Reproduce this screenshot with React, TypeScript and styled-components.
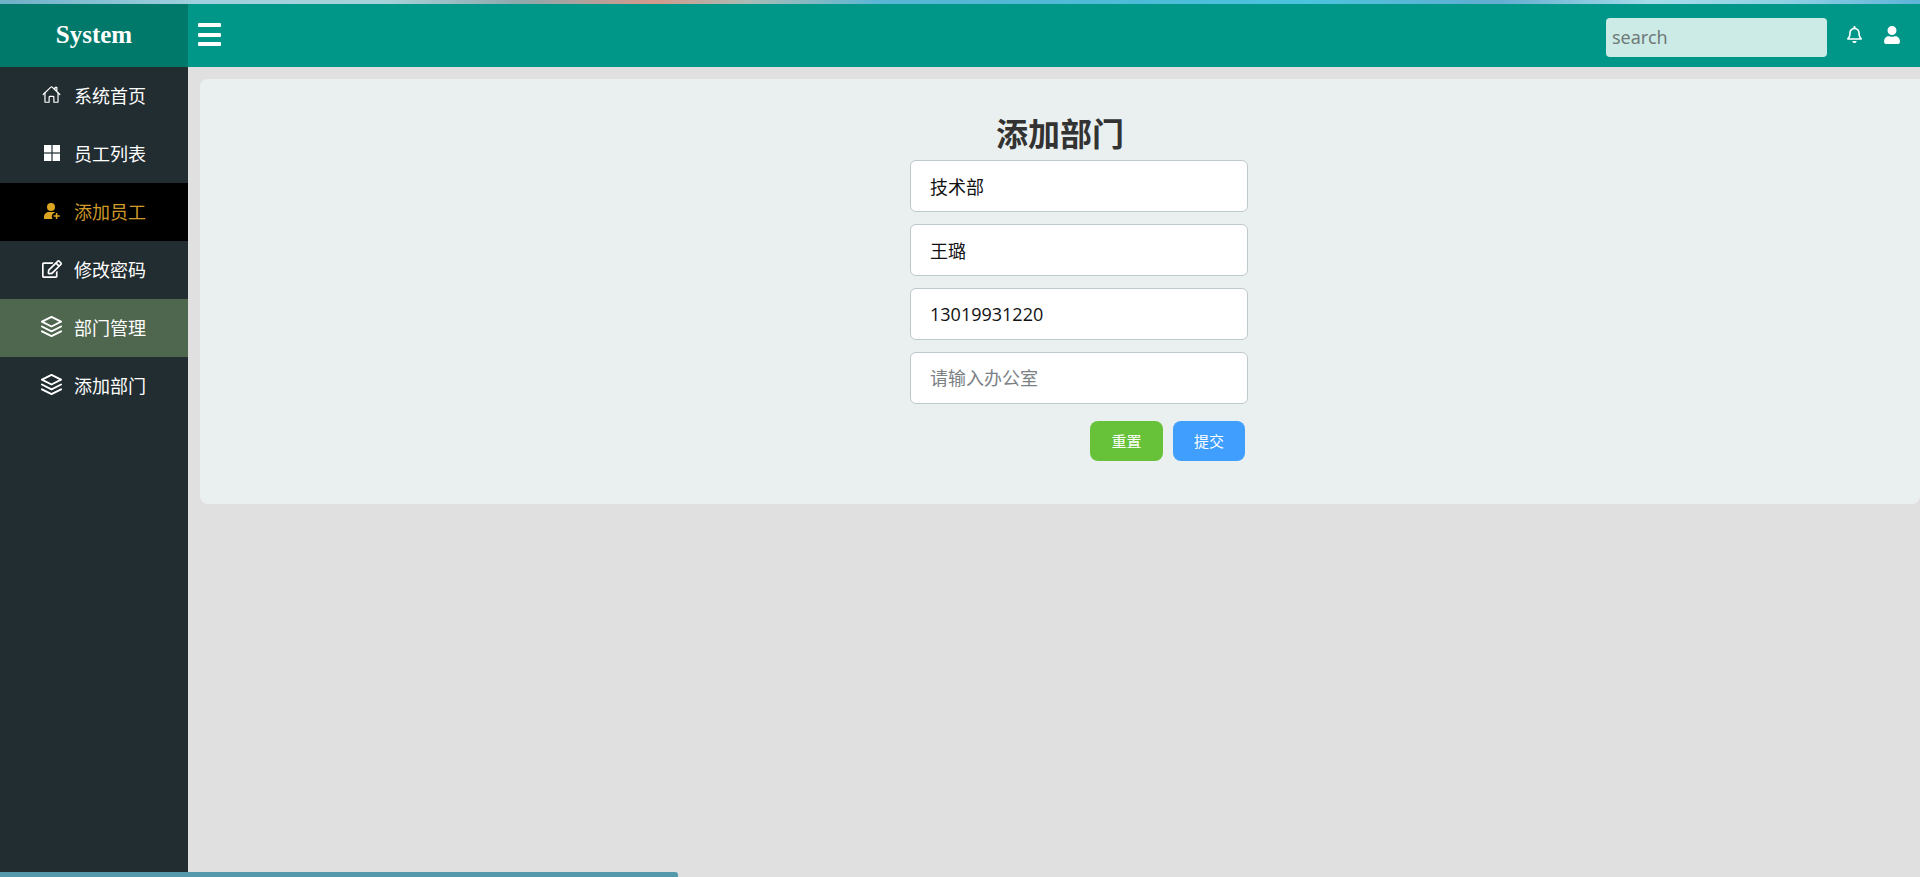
import React from "react";
import styled, { createGlobalStyle } from "styled-components";
import { FaUser, FaRegEdit, FaRegBell } from "react-icons/fa";
import { FiLayers } from "react-icons/fi";
import { IoHomeOutline } from "react-icons/io5";

const Global = createGlobalStyle`
  html, body { margin: 0; padding: 0; height: 100%; overflow: hidden; }
  body { font-family: "Open Sans", "Noto Sans CJK SC", sans-serif; background: #e0e0e0; }
  #root { height: 100%; }
  * { box-sizing: border-box; }
`;

const Page = styled.div`
  position: relative;
  height: 877px;
  display: flex;
  flex-direction: column;
  background: #e0e0e0;
`;
const Strip = styled.div`
  height: 4px;
  flex: none;
  background: linear-gradient(90deg, #6fb0c8 0%, #9fd0de 10%, #a6d3da 20%, #8ea9ad 27%, #d39a8c 34%, #a9bcb5 39%, #58b6d6 46%, #4dbcd8 60%, #4cc4de 68%, #62add0 78%, #a6dcea 86%, #8fd0e4 93%, #5fb4d8 100%);
`;
const TopBar = styled.header`
  height: 63px;
  flex: none;
  display: flex;
  align-items: center;
  background: #009688;
  color: #fff;
`;
const Brand = styled.div`
  width: 188px;
  height: 100%;
  display: flex;
  align-items: center;
  justify-content: center;
  padding-bottom: 1px;
  background: #00796b;
  font-family: "Liberation Serif", serif;
  font-weight: 700;
  font-size: 25px;
`;
const Burger = styled.button`
  width: 23px;
  height: 23px;
  margin: -2px 0 0 10px;
  padding: 0;
  border: 0;
  background: none;
  display: flex;
  flex-direction: column;
  justify-content: space-between;
  span { display: block; height: 4px; border-radius: 1px; background: #fff; }
`;
const TopRight = styled.div`
  margin-left: auto;
  display: flex;
  align-items: center;
  margin-right: 19px;
`;
const Search = styled.input`
  width: 221px;
  height: 39px;
  margin-top: 4px;
  border: 0;
  border-radius: 4px;
  padding: 0 6px 2px;
  background: #ccebe7;
  font: 18px "Noto Sans", sans-serif;
  outline: none;
  &::placeholder { color: #707a78; opacity: 1; }
`;
const TopIcon = styled.span<{ $gap: number; $size: number }>`
  display: flex;
  margin: 0 0 2px ${(p) => p.$gap}px;
  font-size: ${(p) => p.$size}px;
  color: #fff;
`;
const Body = styled.div`
  flex: 1;
  display: flex;
  min-height: 0;
`;
const Side = styled.nav`
  width: 188px;
  flex: none;
  background: #222d32;
  margin-bottom: 5px;
`;
const Item = styled.div<{ $state?: "active" | "hover" }>`
  height: 58px;
  display: flex;
  align-items: center;
  padding: 0 0 3px 42px;
  gap: 13px;
  font-size: 18px;
  color: ${(p) => (p.$state === "active" ? "#cf9a2a" : "#fff")};
  background: ${(p) => (p.$state === "active" ? "#000" : p.$state === "hover" ? "#4f664f" : "transparent")};
`;
const ItemIcon = styled.span<{ $size?: number }>`
  width: 19px;
  height: 18px;
  display: flex;
  align-items: center;
  justify-content: center;
  font-size: ${(p) => p.$size ?? 18}px;
  svg { flex: none; }
`;
const Main = styled.main`
  flex: 1;
  padding: 12px 0 0 12px;
  min-width: 0;
`;
const Card = styled.section`
  height: 425px;
  background: #eaf0f0;
  border-radius: 8px 0 8px 8px;
  padding-top: 27px;
  display: flex;
  flex-direction: column;
  align-items: flex-start;
`;
const Title = styled.h2`
  margin: 0 0 0 796px;
  height: 54px;
  line-height: 53px;
  font-size: 32px;
  font-weight: 700;
  color: #333;
  font-family: "Noto Sans CJK SC", sans-serif;
`;
const Form = styled.form`
  margin-left: 710px;
  width: 338px;
  display: flex;
  flex-direction: column;
  gap: 12px;
`;
const Field = styled.input`
  width: 100%;
  height: 52px;
  border: 1px solid #bfc8cc;
  border-radius: 6px;
  padding: 0 19px;
  background: #fff;
  font: 18px "Open Sans", "Noto Sans CJK SC", sans-serif;
  color: #111;
  outline: none;
  &::placeholder { color: #7b8084; opacity: 1; }
`;
const Actions = styled.div`
  display: flex;
  justify-content: flex-end;
  gap: 10px;
  margin: 5px 3px 0 0;
`;
const Btn = styled.button<{ $bg: string; $w: number }>`
  width: ${(p) => p.$w}px;
  height: 40px;
  padding: 0 0 2px;
  border: 0;
  border-radius: 8px;
  background: ${(p) => p.$bg};
  color: #fff;
  font: 15px "Noto Sans CJK SC", sans-serif;
`;
const Scroll = styled.div`
  position: absolute;
  left: 0;
  bottom: 0;
  width: 678px;
  height: 5px;
  background: #5499ac;
  border-top-right-radius: 3px;
`;

const GridIcon = () => (
  <svg width="16" height="16" viewBox="0 0 16 16" fill="currentColor">
    <rect x="0" y="0" width="7.4" height="7.4" />
    <rect x="8.6" y="0" width="7.4" height="7.4" />
    <rect x="0" y="8.6" width="7.4" height="7.4" />
    <rect x="8.6" y="8.6" width="7.4" height="7.4" />
  </svg>
);

const UserPlusIcon = () => (
  <svg width="16" height="16" viewBox="0 0 16 16" fill="#daa520">
    <circle cx="7" cy="4" r="4" />
    <path d="M0 16v-2c0-3 2.400-5 5-5h4.500c.8 0 1.400.2 1.500.4A4.200 4.200 0 0 0 8.600 16H0z" />
    <path d="M11.800 10h1.600v2.200h2.400v1.600h-2.400V16h-1.600v-2.200H9.600v-1.600h2.200z" />
  </svg>
);

const menu = [
  { label: "系统首页", icon: <IoHomeOutline />, size: 19 },
  { label: "员工列表", icon: <GridIcon /> },
  { label: "添加员工", icon: <UserPlusIcon />, state: "active" as const },
  { label: "修改密码", icon: <FaRegEdit />, size: 20 },
  { label: "部门管理", icon: <FiLayers />, state: "hover" as const, size: 23 },
  { label: "添加部门", icon: <FiLayers />, size: 23 },
];

export default function App() {
  return (
    <Page>
      <Global />
      <Strip />
      <TopBar>
        <Brand>System</Brand>
        <Burger type="button" aria-label="menu"><span /><span /><span /></Burger>
        <TopRight>
          <Search placeholder="search" />
          <TopIcon $gap={19} $size={17}><FaRegBell /></TopIcon>
          <TopIcon $gap={20} $size={18}><FaUser /></TopIcon>
        </TopRight>
      </TopBar>
      <Body>
        <Side>
          {menu.map((m) => (
            <Item key={m.label} $state={m.state}>
              <ItemIcon $size={m.size}>{m.icon}</ItemIcon>
              {m.label}
            </Item>
          ))}
        </Side>
        <Main>
          <Card>
            <Title>添加部门</Title>
            <Form onSubmit={(e) => e.preventDefault()}>
              <Field defaultValue="技术部" />
              <Field defaultValue="王璐" />
              <Field defaultValue="13019931220" />
              <Field placeholder="请输入办公室" />
              <Actions>
                <Btn type="button" $bg="#67c23a" $w={73}>重置</Btn>
                <Btn type="submit" $bg="#409eff" $w={72}>提交</Btn>
              </Actions>
            </Form>
          </Card>
        </Main>
      </Body>
      <Scroll />
    </Page>
  );
}
